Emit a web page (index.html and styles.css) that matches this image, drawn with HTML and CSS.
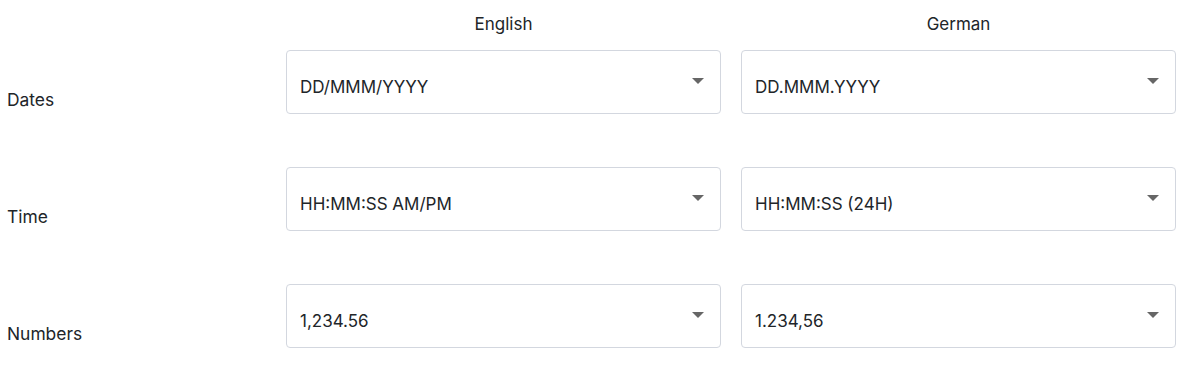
FILE: index.html
```html
<!DOCTYPE html>
<html lang="en">
<head>
    <meta charset="UTF-8">
    <meta name="viewport" content="width=device-width, initial-scale=1.0">
    <title>Locale Formats</title>
    <link rel="stylesheet" href="styles.css">
</head>
<body>
    <div class="formats">
        <div class="head"></div>
        <div class="head">English</div>
        <div class="head">German</div>

        <div class="label">Dates</div>
        <div class="select"><span>DD/MMM/YYYY</span><i class="caret"></i></div>
        <div class="select"><span>DD.MMM.YYYY</span><i class="caret"></i></div>

        <div class="label">Time</div>
        <div class="select"><span>HH:MM:SS AM/PM</span><i class="caret"></i></div>
        <div class="select"><span>HH:MM:SS (24H)</span><i class="caret"></i></div>

        <div class="label">Numbers</div>
        <div class="select"><span>1,234.56</span><i class="caret"></i></div>
        <div class="select"><span>1.234,56</span><i class="caret"></i></div>
    </div>
</body>
</html>
```

FILE: styles.css
```css
body { margin: 0; font-family: Inter, "Noto Sans", sans-serif; color: #212529; background: #fff; }
.formats { display: grid; grid-template-columns: 266px 435px 435px; column-gap: 20px; }
.head { font-size: 17px; line-height: 24px; text-align: center; padding-top: 12px; height: 38px; }
.label { font-size: 17.4px; line-height: 24px; padding: 38px 0 0 7px; margin-bottom: 53px; }
.select { position: relative; height: 64px; box-sizing: border-box; border: 1px solid #d3d7df; border-radius: 4px; padding: 24px 13px 0; font-size: 17px; line-height: 24px; margin-bottom: 53px; }
.caret { position: absolute; right: 16px; top: 27px; width: 0; height: 0; border-left: 6px solid transparent; border-right: 6px solid transparent; border-top: 6px solid #666; }
```
